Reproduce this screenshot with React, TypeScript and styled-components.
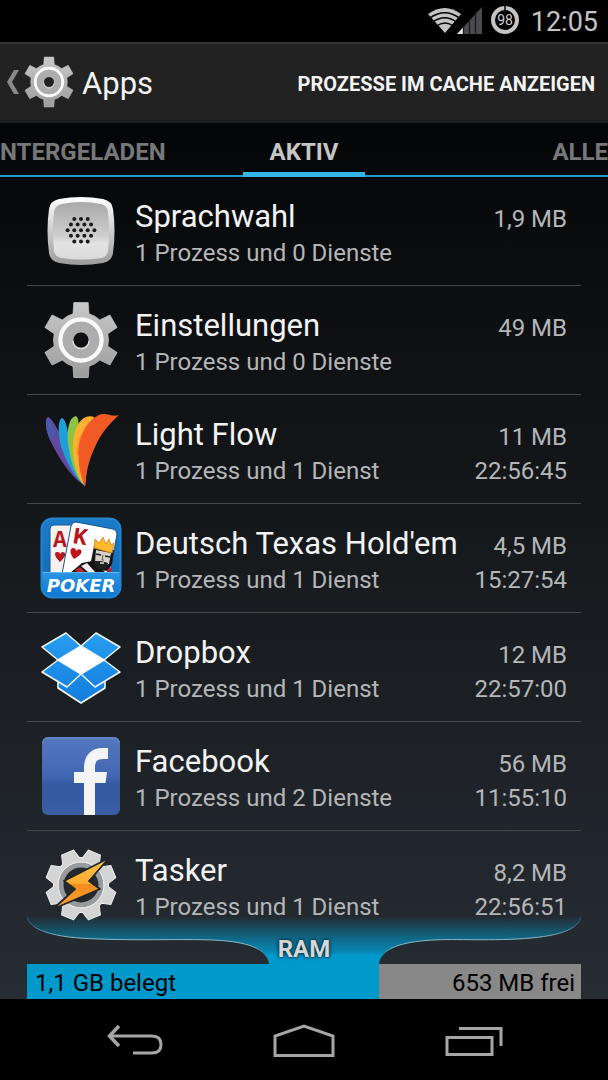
import React from 'react';
import styled, { createGlobalStyle } from 'styled-components';

const GlobalStyle = createGlobalStyle`
  * { box-sizing: border-box; }
  body {
    margin: 0;
    background: #000;
    font-family: Roboto, "Noto Sans", sans-serif;
    color: #f3f3f3;
  }
  button {
    font: inherit;
    color: inherit;
    background: none;
    border: 0;
    padding: 0;
    cursor: pointer;
  }
  svg { display: block; }
`;

const Screen = styled.div`
  min-height: 100vh;
  display: flex;
  flex-direction: column;
  overflow: hidden;
`;

const StatusBar = styled.div`
  height: 42px;
  padding-right: 10px;
  display: flex;
  justify-content: flex-end;
  align-items: center;
  background: #000;
`;

const Clock = styled.time`
  margin-left: 11px;
  font-size: 27px;
  line-height: 32px;
  padding-top: 2px;
  color: #c4c4c4;
`;

const ActionBar = styled.header`
  height: 81px;
  padding: 0 13px 0 6px;
  display: flex;
  align-items: center;
  justify-content: space-between;
  background: #222;
  border-top: 2px solid #333;
  border-bottom: 3px solid #1b1c1d;
`;

const UpButton = styled.button`
  display: flex;
  align-items: center;
  gap: 4px;
`;

const ScreenTitle = styled.h1`
  margin: 0 0 0 3px;
  padding-top: 4px;
  font-size: 31px;
  line-height: 36px;
  font-weight: 400;
`;

const ActionButton = styled.button`
  padding-top: 4px;
  font-size: 20px;
  line-height: 28px;
  font-weight: 700;
  white-space: nowrap;
`;

const Content = styled.main`
  flex: 1;
  display: flex;
  flex-direction: column;
  background: linear-gradient(#040507 0%, #0b0c0e 15%, #15181b 45%, #20252b 80%, #262d32 100%);
`;

const Tabs = styled.nav`
  height: 54px;
  display: grid;
  grid-template-columns: 1fr 122px 1fr;
  border-bottom: 2px solid #1f9bcb;
`;

const Tab = styled.button<{ $active?: boolean; $align: 'left' | 'center' | 'right' }>`
  height: 54px;
  padding-top: 8px;
  font-size: 24px;
  line-height: 28px;
  font-weight: 700;
  white-space: nowrap;
  text-align: ${p => p.$align};
  color: ${p => (p.$active ? '#c6c6c6' : '#77787a')};
  border-bottom: ${p => (p.$active ? '5px solid #33b5e5' : '5px solid transparent')};
`;

const AppList = styled.ul`
  list-style: none;
  margin: 0 27px;
  padding: 0;
`;

const AppItem = styled.li`
  & + & { border-top: 1px solid #44484b; }
`;

const AppButton = styled.button`
  width: 100%;
  height: 108px;
  padding-right: 14px;
  display: grid;
  grid-template-columns: 108px 1fr auto;
  align-items: center;
  text-align: left;
`;

const IconCell = styled.span`
  display: flex;
  justify-content: center;
`;

const Lines = styled.span<{ $end?: boolean }>`
  display: flex;
  flex-direction: column;
  padding-top: 6px;
  white-space: nowrap;
  text-align: ${p => (p.$end ? 'right' : 'left')};
`;

const AppName = styled.span`
  font-size: 31px;
  line-height: 38px;
`;

const Detail = styled.span`
  font-size: 24px;
  line-height: 34px;
  color: #b5b6b7;
`;

const Size = styled(Detail)`
  padding-top: 4px;
`;

const Memory = styled.section`
  margin: -23px 27px 0;
  position: relative;
`;

const Funnel = styled.svg`
  width: 100%;
  height: 48px;
`;

const MemoryTitle = styled.h2`
  position: absolute;
  top: 19px;
  left: 0;
  right: 0;
  margin: 0;
  text-align: center;
  font-size: 24px;
  line-height: 28px;
  font-weight: 700;
  color: #d6d6d6;
  text-shadow: 0 0 4px #00222f, 0 0 2px #00222f;
`;

const MemoryBar = styled.div`
  height: 35px;
  display: flex;
  justify-content: space-between;
  align-items: center;
  padding: 2px 6px 0 8px;
  font-size: 24px;
  line-height: 32px;
  color: #000;
  background: linear-gradient(90deg, #0099cc 63.54%, #888 63.54%);
`;

const NavBar = styled.nav`
  height: 81px;
  display: grid;
  grid-template-columns: 1fr 1fr 1fr;
  padding: 0 49px;
  background: #000;
`;

const NavButton = styled.button`
  display: flex;
  justify-content: center;
  align-items: center;
  padding-top: 2px;
`;

function gearPath(teeth: number, outer: number, inner: number, tip: number, base: number) {
  const points: string[] = [];
  for (let i = 0; i < teeth; i++) {
    const a = (i * 2 * Math.PI) / teeth - Math.PI / 2;
    const at = (along: number, across: number) =>
      `${(Math.cos(a) * along - Math.sin(a) * across).toFixed(2)} ${(Math.sin(a) * along + Math.cos(a) * across).toFixed(2)}`;
    const root = Math.sqrt(inner * inner - base * base);
    points.push(at(root, -base), `L${at(outer, -tip)}`, `L${at(outer, tip)}`, `L${at(root, base)}`);
    const n = ((i + 1) * 2 * Math.PI) / teeth - Math.PI / 2;
    const x = Math.cos(n) * root + Math.sin(n) * base;
    const y = Math.sin(n) * root - Math.cos(n) * base;
    points.push(`A${inner} ${inner} 0 0 1 ${x.toFixed(2)} ${y.toFixed(2)}${i < teeth - 1 ? 'L' : 'Z'}`);
  }
  return 'M' + points.join('');
}

function GearIcon({ size, id }: { size: number; id: string }) {
  return (
    <svg width={size} height={size} viewBox="-39 -39 78 78" aria-hidden="true">
      <defs>
        <linearGradient id={id} x1="0" y1="0" x2="0" y2="1">
          <stop offset="0" stopColor="#c9c9c9" />
          <stop offset="1" stopColor="#9c9c9c" />
        </linearGradient>
      </defs>
      <path
        fillRule="evenodd"
        fill={`url(#${id})`}
        stroke="#c8c8c8"
        strokeWidth="0.7"
        d={gearPath(6, 37.5, 27.5, 7.2, 8) + 'M8 0A8 8 0 1 0 -8 0A8 8 0 1 0 8 0Z'}
      />
      <circle r="20.5" fill="none" stroke="#fafafa" strokeWidth="4.4" />
      <circle r="13.3" fill="none" stroke="#adadad" strokeWidth="10" />
      <path d="M-8 1A8 8 0 0 0 8 1" fill="none" stroke="#e4e4e4" strokeWidth="1.2" />
    </svg>
  );
}

function VoiceIcon() {
  const rows = [3, 4, 5, 4, 3];
  return (
    <svg width="78" height="78" viewBox="0 0 78 78" aria-hidden="true">
      <defs>
        <linearGradient id="voiceRim" x1="0" y1="0" x2="0" y2="1">
          <stop offset="0" stopColor="#fff" />
          <stop offset="1" stopColor="#9b9b9b" />
        </linearGradient>
        <linearGradient id="voiceFace" x1="0" y1="0" x2="0" y2="1">
          <stop offset="0" stopColor="#a9a9a9" />
          <stop offset="0.6" stopColor="#cfcfcf" />
          <stop offset="0.72" stopColor="#e3e3e3" />
          <stop offset="1" stopColor="#dadada" />
        </linearGradient>
      </defs>
      <path d="M17 7Q39 3 61 7Q70 9 71 17Q74 39 71 61Q70 69 61 71Q39 75 17 71Q8 69 7 61Q4 39 7 17Q8 9 17 7Z" fill="url(#voiceRim)" />
      <path d="M20 12Q39 8 59 12Q65 13 66 20Q68 39 66 59Q65 65 59 66Q39 69 20 66Q13 65 12 59Q10 39 12 20Q13 13 20 12Z" fill="url(#voiceFace)" />
      {rows.map((count, r) =>
        Array.from({ length: count }, (_, c) => (
          <circle key={`${r}-${c}`} cx={39 + (c - (count - 1) / 2) * 6.7} cy={27 + r * 5.6} r="2" fill="#1c1c1c" />
        )),
      )}
    </svg>
  );
}

function LightFlowIcon() {
  return (
    <svg width="78" height="78" viewBox="0 0 78 78" aria-hidden="true">
      <path d="M6 7C2 10 4 23 10 34C18 50 29 67 43 76C38 60 27 46 22 34C18 24 12 10 6 7Z" fill="#63489f" />
      <path d="M6 7C2 10 4 20 8 30L14 24C11 17 9 10 6 7Z" fill="#4a58a8" />
      <path d="M20 8C15 10 16 29 21 42C26 55 33 68 43 76C38 62 31 47 28 34C26 24 25 10 20 8Z" fill="#1f9fd8" />
      <path d="M34 6C26 7 24 25 27 39C29 52 33 66 42 75C38 59 34 42 35 29C35 20 39 10 34 6Z" fill="#8bc53f" />
      <path d="M52 7C40 3 32 17 31 33C30 48 34 67 43 76L47 37Z" fill="#fbb034" />
      <path d="M52 8C41 16 36 28 34 44L38 46L56 9Z" fill="#f7941e" />
      <path d="M77 5C70 7 68 4 61 4C51 5 42 17 38 31C34 46 38 65 43 77C44 61 48 47 53 37C58 25 66 15 77 5Z" fill="#f15a24" />
    </svg>
  );
}

function PokerIcon() {
  return (
    <svg width="82" height="82" viewBox="0 0 82 82" aria-hidden="true">
      <defs>
        <linearGradient id="pokerBack" x1="0" y1="0" x2="0" y2="1">
          <stop offset="0" stopColor="#1b7cc9" />
          <stop offset="1" stopColor="#1269b4" />
        </linearGradient>
        <linearGradient id="pokerBand" x1="0" y1="0" x2="0" y2="1">
          <stop offset="0" stopColor="#2b96e4" />
          <stop offset="1" stopColor="#0b76cf" />
        </linearGradient>
        <clipPath id="pokerClip"><rect x="1" y="1" width="80" height="80" rx="11" /></clipPath>
      </defs>
      <g clipPath="url(#pokerClip)">
        <rect width="82" height="82" fill="url(#pokerBack)" />
        <rect x="10" y="8" width="38" height="60" rx="4" fill="#f5f1ef" stroke="#145a96" />
        <text x="13" y="30" fontFamily="Liberation Mono, monospace" fontWeight="700" fontSize="23" fill="#b51620">A</text>
        <path d="M20 45C14 39 14 35 17 35Q20 35 20 37Q21 35 23 35C27 36 26 39 20 45Z" fill="#b51620" />
        <path d="M36 5Q32 5 31 9L22 57H70L77 17Q77 13 73 12Z" fill="#fff" stroke="#17558b" />
        <text x="32" y="26" fontFamily="Liberation Mono, monospace" fontWeight="700" fontSize="24" fill="#b51620" transform="rotate(9 32 26)">K</text>
        <path d="M34 42C29 36 30 31 33 31Q36 31 36 34Q38 31 41 33C43 36 39 39 34 42Z" fill="#c0121c" />
        <path d="M30 56L42 46L52 44L66 56Z" fill="#141414" />
        <path d="M41 49L47 46L56 56H49Z" fill="#f0eded" />
        <path d="M35 53L40 50L46 56H38Z" fill="#bf1e2d" />
        <path d="M54 29L51 44L57 53L68 54L72 47L74 33Z" fill="#161616" />
        <path d="M56 33L71 36L69 47L62 50L55 45Z" fill="#d6d0c9" />
        <path d="M56 37L61 38M65 39L70 40" stroke="#231f20" strokeWidth="1.6" />
        <path d="M63 38L62 43H64" fill="none" stroke="#6b5b52" />
        <path d="M54 44L61 44L68 46L66 51L61 53L56 50Z" fill="#222" />
        <path d="M60 46H64" stroke="#e8e2dc" strokeWidth="1.4" />
        <path d="M55 22L59 26L63 20L66 27L69 22L71 28L74 26L72 36L54 31Z" fill="#fdb92e" stroke="#d98512" strokeWidth="0.8" />
        <path d="M68 52L72 50L71 56H66Z" fill="#bf1e2d" />
        <rect y="55" width="82" height="27" fill="url(#pokerBand)" />
        <path d="M0 55.5H82" stroke="#5ab9f2" />
      </g>
      <rect x="1.5" y="1.5" width="79" height="79" rx="11" fill="none" stroke="#2385d2" strokeWidth="2" />
      <text x="41" y="75" textAnchor="middle" fontFamily="DejaVu Sans, sans-serif" fontWeight="700" fontStyle="italic" fontSize="18" fill="#fff">POKER</text>
    </svg>
  );
}

function DropboxIcon() {
  return (
    <svg width="82" height="82" viewBox="0 0 82 82" aria-hidden="true">
      <defs>
        <linearGradient id="boxBlue" gradientUnits="userSpaceOnUse" x1="0" y1="0" x2="0" y2="82">
          <stop offset="0" stopColor="#2aa1f2" />
          <stop offset="1" stopColor="#137bdc" />
        </linearGradient>
      </defs>
      <path d="M18 50L41 46L65 50V62L41 77L18 62Z" fill="url(#boxBlue)" stroke="#fff" strokeWidth="1.5" strokeLinejoin="round" />
      <path d="M41 20L64 34L41 48L18 34Z" fill="#fff" />
      <g fill="url(#boxBlue)" stroke="#f2f8fd" strokeWidth="1.5" strokeLinejoin="round">
        <path d="M26 7L41 20L18 34L2 21Z" />
        <path d="M56 7L80 21L64 34L41 20Z" />
        <path d="M18 34L41 48L27 61L2 46Z" />
        <path d="M64 34L80 46L55 61L41 48Z" />
      </g>
    </svg>
  );
}

function FacebookIcon() {
  return (
    <svg width="78" height="78" viewBox="0 0 78 78" aria-hidden="true">
      <defs>
        <linearGradient id="fbBlue" x1="0" y1="0" x2="0" y2="1">
          <stop offset="0" stopColor="#5478bf" />
          <stop offset="0.5" stopColor="#4267b2" />
          <stop offset="0.62" stopColor="#3459a1" />
          <stop offset="1" stopColor="#3a5ea6" />
        </linearGradient>
      </defs>
      <rect width="78" height="78" rx="6" fill="url(#fbBlue)" />
      <path d="M1 6Q1 1 6 1H72Q77 1 77 6" fill="none" stroke="#6d8ccb" />
      <path d="M66 16.5H61Q47.5 16.5 47.5 31V78" fill="none" stroke="#f4f4f6" strokeWidth="11" />
      <path d="M32 35H65L63.5 46H32Z" fill="#f4f4f6" />
    </svg>
  );
}

function TaskerIcon() {
  return (
    <svg width="78" height="78" viewBox="-39 -39 78 78" aria-hidden="true">
      <defs>
        <linearGradient id="boltFill" x1="0" y1="0" x2="0" y2="1">
          <stop offset="0" stopColor="#ffc54a" />
          <stop offset="0.5" stopColor="#fbac30" />
          <stop offset="0.52" stopColor="#f38b1c" />
          <stop offset="1" stopColor="#f9a63a" />
        </linearGradient>
      </defs>
      <path d={gearPath(8, 35, 27.5, 6.5, 9)} transform="rotate(22.5)" fill="#d4d4d4" stroke="#f0f0f0" strokeWidth="1" />
      <circle r="20" fill="#24292e" stroke="#989b9e" strokeWidth="5" />
      <circle r="23" fill="none" stroke="#eee" strokeWidth="1" />
      <path d="M28 -27L-17 -4L-6 4L-28 24L19 4L8 -4Z" fill="url(#boltFill)" stroke="#222529" strokeWidth="1.8" strokeLinejoin="round" />
    </svg>
  );
}

interface AppEntry {
  name: string;
  detail: string;
  size: string;
  time?: string;
  icon: React.ReactNode;
}

const apps: AppEntry[] = [
  { name: 'Sprachwahl', detail: '1 Prozess und 0 Dienste', size: '1,9 MB', icon: <VoiceIcon /> },
  { name: 'Einstellungen', detail: '1 Prozess und 0 Dienste', size: '49 MB', icon: <GearIcon size={78} id="gearLarge" /> },
  { name: 'Light Flow', detail: '1 Prozess und 1 Dienst', size: '11 MB', time: '22:56:45', icon: <LightFlowIcon /> },
  { name: "Deutsch Texas Hold'em", detail: '1 Prozess und 1 Dienst', size: '4,5 MB', time: '15:27:54', icon: <PokerIcon /> },
  { name: 'Dropbox', detail: '1 Prozess und 1 Dienst', size: '12 MB', time: '22:57:00', icon: <DropboxIcon /> },
  { name: 'Facebook', detail: '1 Prozess und 2 Dienste', size: '56 MB', time: '11:55:10', icon: <FacebookIcon /> },
  { name: 'Tasker', detail: '1 Prozess und 1 Dienst', size: '8,2 MB', time: '22:56:51', icon: <TaskerIcon /> },
];

export default function App() {
  return (
    <Screen>
      <GlobalStyle />
      <StatusBar>
        <svg width="92" height="42" viewBox="0 0 92 42" role="img" aria-label="WLAN, Mobilfunk, Akku">
          <path d="M0 14Q17 2 33 14L17 33Z" fill="#c4c4c4" />
          <g fill="none" stroke="#000" strokeWidth="1.5">
            <path d="M1 18.5Q17 7 32 18.5" />
            <path d="M4 22.5Q17 13 29 22.5" />
            <path d="M8 26.5Q17 19.5 26 26.5" />
          </g>
          <path d="M29 34L54 7V34Z" fill="#4b4b4f" />
          <path d="M29 34L35 27.5V34Z" fill="#e2e2e2" />
          <path d="M35.5 25V34M41.5 19V34M47.5 12V34" stroke="#17171a" strokeWidth="1.2" />
          <circle cx="77" cy="20" r="12" fill="none" stroke="#c4c4c4" strokeWidth="4" />
          <path d="M77 5V11" stroke="#000" strokeWidth="1.5" />
          <text x="77" y="25" textAnchor="middle" fontFamily="Roboto, sans-serif" fontSize="14" fill="#d0d0d0">98</text>
        </svg>
        <Clock>12:05</Clock>
      </StatusBar>
      <ActionBar>
        <UpButton aria-label="Apps, zurück">
          <svg width="13" height="26" viewBox="0 0 13 26" aria-hidden="true">
            <path d="M8 1H13L6 13L13 25H8L1 13Z" fill="#8a8a8a" />
          </svg>
          <GearIcon size={52} id="gearSmall" />
          <ScreenTitle>Apps</ScreenTitle>
        </UpButton>
        <ActionButton>PROZESSE IM CACHE ANZEIGEN</ActionButton>
      </ActionBar>
      <Content>
        <Tabs>
          <Tab $align="left">NTERGELADEN</Tab>
          <Tab $align="center" $active aria-current="page">AKTIV</Tab>
          <Tab $align="right">ALLE</Tab>
        </Tabs>
        <AppList>
          {apps.map(app => (
            <AppItem key={app.name}>
              <AppButton>
                <IconCell>{app.icon}</IconCell>
                <Lines>
                  <AppName>{app.name}</AppName>
                  <Detail>{app.detail}</Detail>
                </Lines>
                <Lines $end>
                  <Size>{app.size}</Size>
                  <Detail>{app.time ?? '\u00a0'}</Detail>
                </Lines>
              </AppButton>
            </AppItem>
          ))}
        </AppList>
        <Memory>
          <Funnel viewBox="0 0 554 48" preserveAspectRatio="none" aria-hidden="true">
            <defs>
              <linearGradient id="funnelFill" x1="0" y1="0" x2="0" y2="1">
                <stop offset="0" stopColor="#0099cc" stopOpacity="0" />
                <stop offset="0.5" stopColor="#0099cc" stopOpacity="0.6" />
                <stop offset="0.76" stopColor="#0099cc" stopOpacity="0.85" />
                <stop offset="0.8" stopColor="#0099cc" />
              </linearGradient>
              <linearGradient id="funnelEdge" x1="0" y1="0" x2="0" y2="1">
                <stop offset="0" stopColor="#3a6fb5" stopOpacity="0.4" />
                <stop offset="0.45" stopColor="#8fb9c4" />
                <stop offset="0.65" stopColor="#7fb3c2" />
                <stop offset="1" stopColor="#0099cc" stopOpacity="0" />
              </linearGradient>
            </defs>
            <path d="M0 0C2 14 26 22 72 23C120 25 170 22 200 25C228 28 241 36 242 48H352C353 36 366 28 394 25C420 22 450 25 490 23C530 21 552 14 554 0Z" fill="url(#funnelFill)" />
            <path d="M0 0C2 14 26 22 72 23C120 25 170 22 200 25C228 28 241 36 242 48M352 48C353 36 366 28 394 25C420 22 450 25 490 23C530 21 552 14 554 0" fill="none" stroke="url(#funnelEdge)" strokeWidth="1" />
          </Funnel>
          <MemoryTitle>RAM</MemoryTitle>
          <MemoryBar>
            <span>1,1 GB belegt</span>
            <span>653 MB frei</span>
          </MemoryBar>
        </Memory>
      </Content>
      <NavBar>
        <NavButton aria-label="Zurück">
          <svg width="58" height="34" viewBox="0 0 58 34" fill="none" stroke="#a6a6a6" strokeWidth="3" aria-hidden="true">
            <path d="M5 12H47Q56 12 56 20.5Q56 29 47 29H28" />
            <path d="M14 2L4.5 12L14 22" strokeWidth="3.5" />
          </svg>
        </NavButton>
        <NavButton aria-label="Startseite">
          <svg width="62" height="34" viewBox="0 0 62 34" fill="none" stroke="#a6a6a6" strokeWidth="3" aria-hidden="true">
            <path d="M2 31.5V12L31 2L60 12V31.5Z" />
          </svg>
        </NavButton>
        <NavButton aria-label="Letzte Apps">
          <svg width="58" height="34" viewBox="0 0 58 34" fill="none" stroke="#a6a6a6" strokeWidth="3" aria-hidden="true">
            <path d="M2 13.5H47V30.5H2Z" />
            <path d="M14 4.5H56V22" />
          </svg>
        </NavButton>
      </NavBar>
    </Screen>
  );
}
